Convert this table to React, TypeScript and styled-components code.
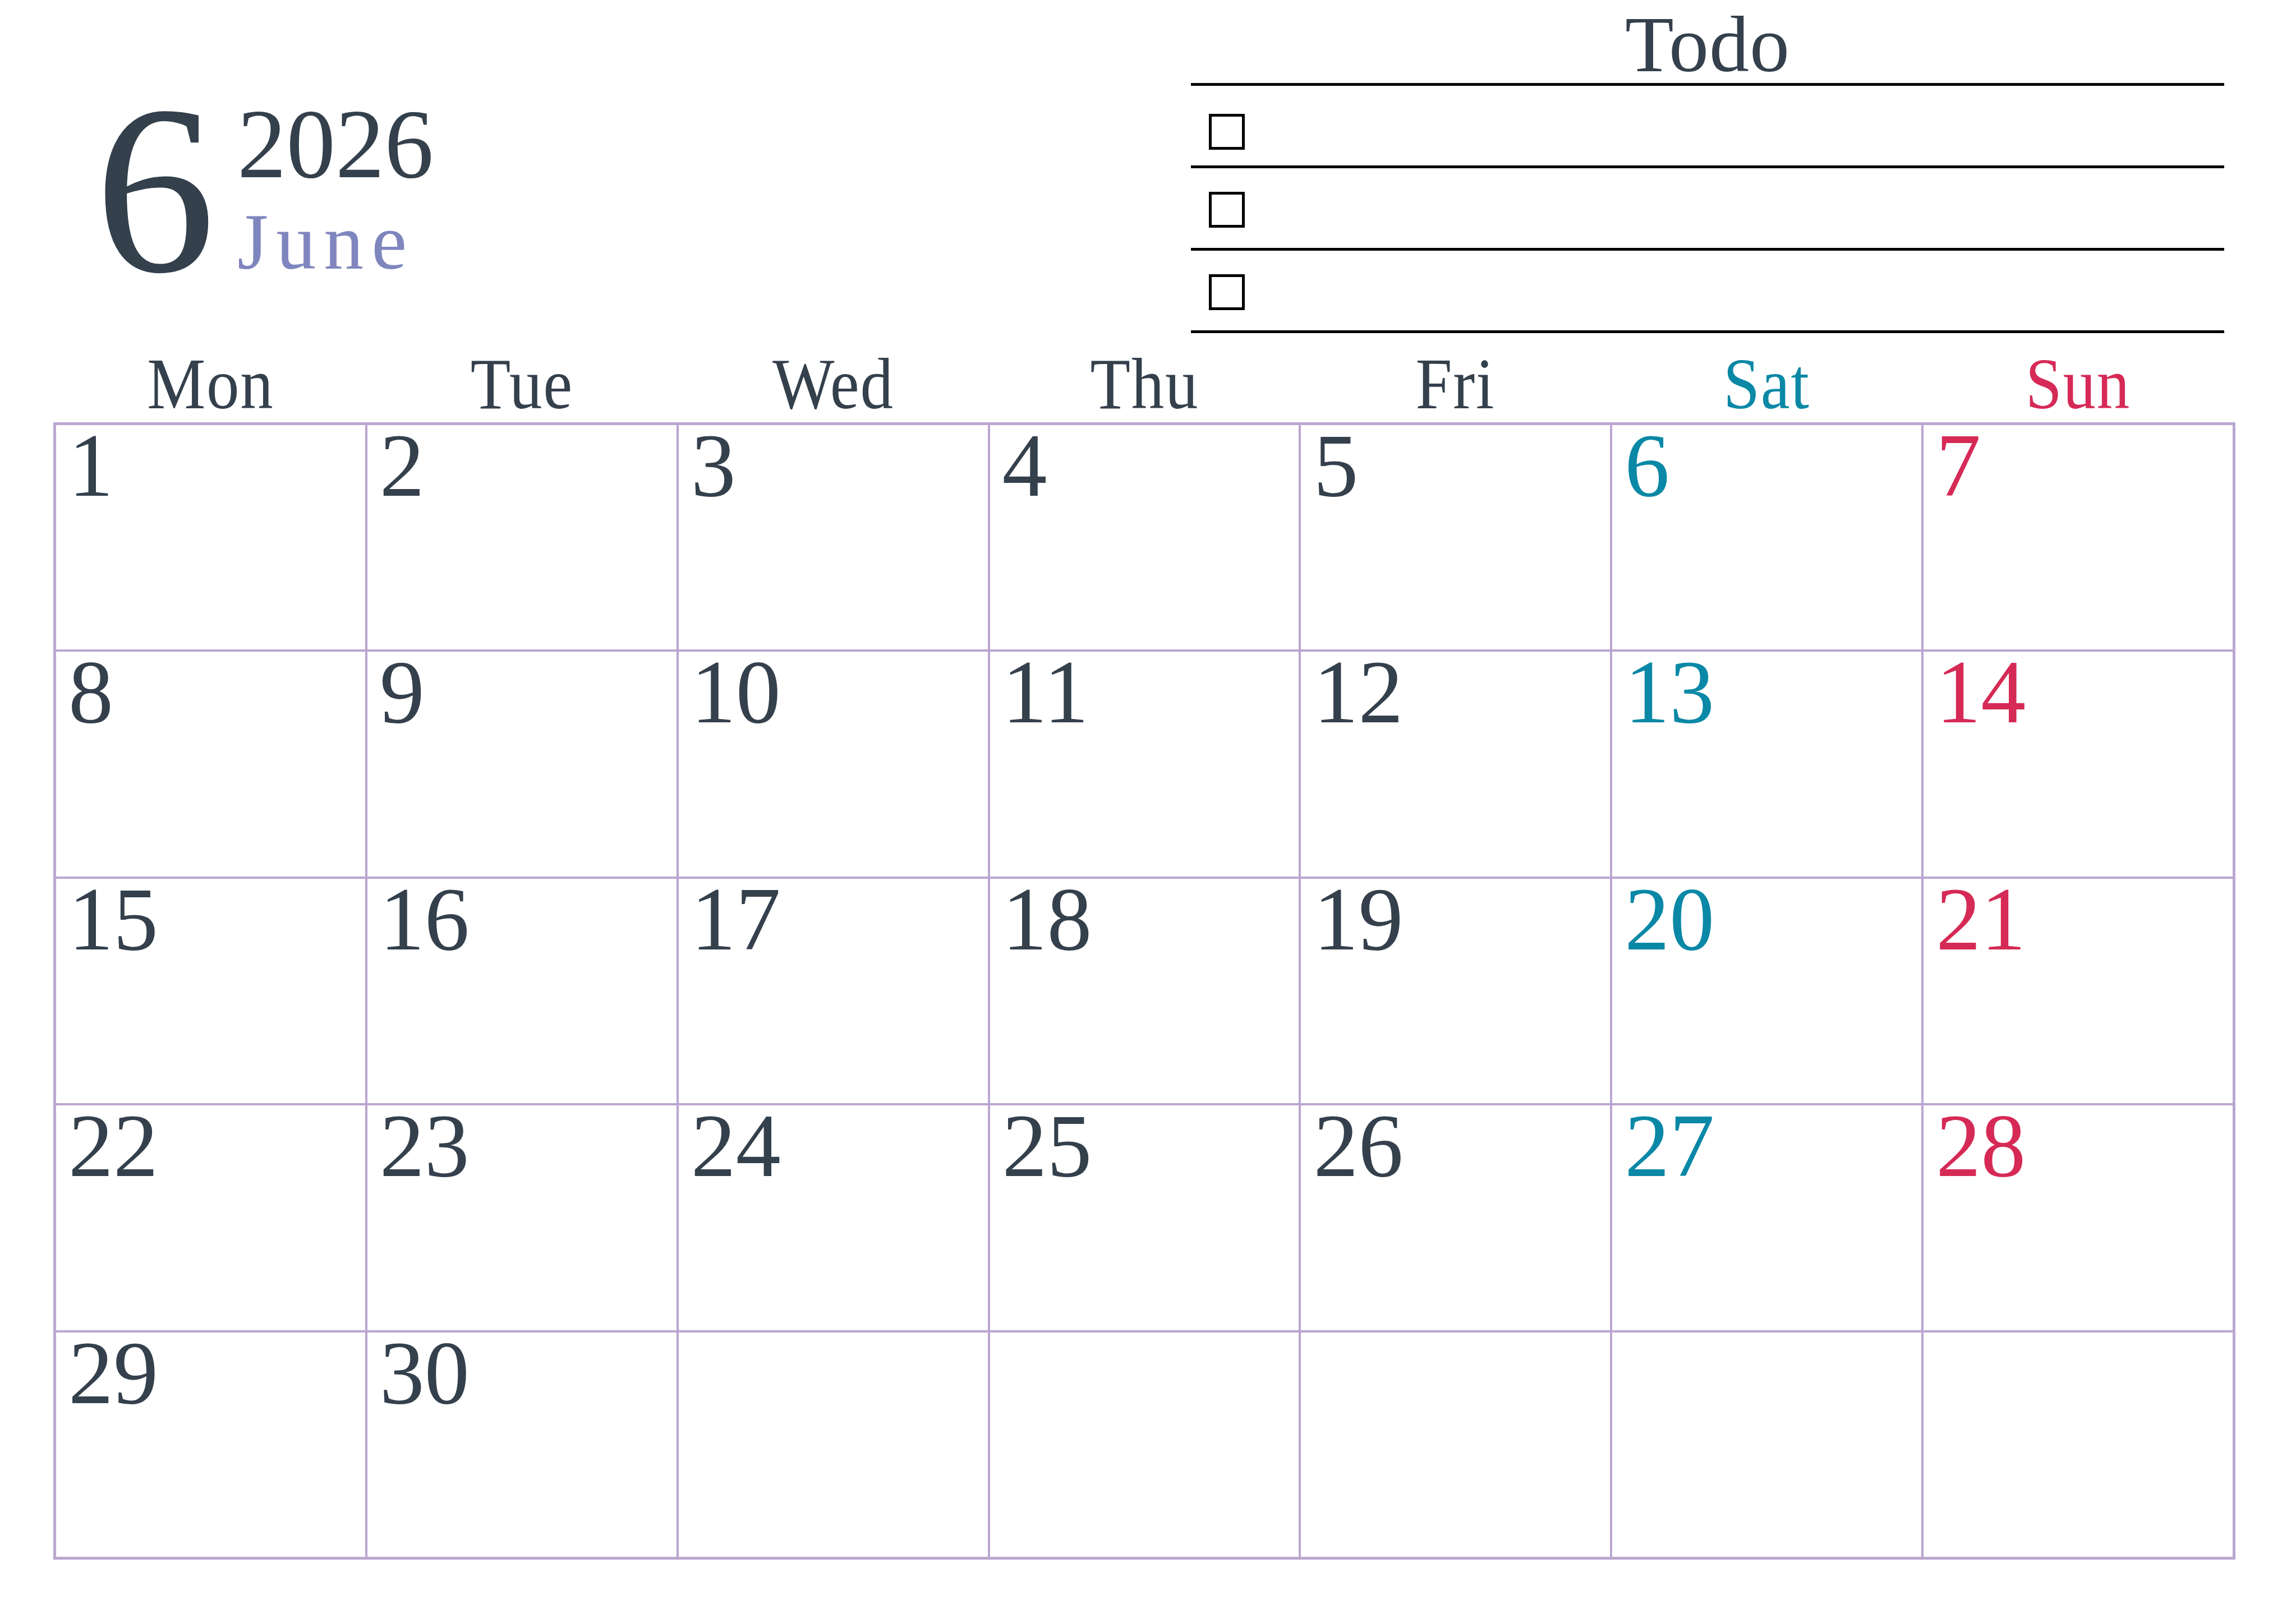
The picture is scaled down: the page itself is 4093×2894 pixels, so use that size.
import React from "react";
import styled, { createGlobalStyle } from "styled-components";

const GlobalStyle = createGlobalStyle`
  html, body {
    margin: 0;
    padding: 0;
    background: #ffffff;
  }
  * {
    box-sizing: border-box;
  }
`;

const ink = "#34404c";
const lineColor = "#bba6d0";
const satColor = "#0a88a6";
const sunColor = "#d62a56";

type Tone = "plain" | "sat" | "sun";

const toneColor = (tone: Tone) =>
  tone === "sat" ? satColor : tone === "sun" ? sunColor : ink;

export const Page = styled.div`
  width: 4093px;
  height: 2894px;
  padding: 0 108px 0 95px;
  background: #ffffff;
  font-family: "Liberation Serif", "Times New Roman", serif;
  color: ${ink};
`;

export const TopArea = styled.div`
  height: 619px;
  display: flex;
  justify-content: space-between;
  align-items: flex-start;
`;

export const MonthBlock = styled.div`
  display: flex;
  align-items: flex-start;
  margin-left: 74px;
`;

export const BigMonth = styled.div`
  font-size: 430px;
  line-height: 1;
  margin-top: 123px;
`;

export const YearColumn = styled.div`
  display: flex;
  flex-direction: column;
  margin-top: 170px;
  margin-left: 39px;
`;

export const Year = styled.div`
  font-size: 175px;
  line-height: 1;
`;

export const MonthName = styled.div`
  font-size: 142px;
  line-height: 1;
  margin-top: 15px;
  letter-spacing: 14px;
  color: #7f86be;
`;

export const TodoBox = styled.div`
  width: 1842px;
  margin-right: 20px;
  display: flex;
  flex-direction: column;
`;

export const TodoTitle = styled.div`
  font-size: 142px;
  line-height: 158px;
  height: 148px;
  text-align: center;
  letter-spacing: 1px;
`;

export const TodoList = styled.div`
  border-top: 5px solid #000000;
`;

export const TodoRow = styled.div`
  height: 147px;
  border-bottom: 5px solid #000000;
  padding: 42px 0 0 32px;

  &:first-child {
    padding-top: 50px;
  }
`;

export const CheckBox = styled.div`
  width: 64px;
  height: 64px;
  border: 5px solid #000000;
`;

export const WeekRow = styled.div`
  display: grid;
  grid-template-columns: repeat(7, 1fr);
  width: 3890px;
  padding: 0 5px;
  column-gap: 4px;
  margin-bottom: 4px;
`;

export const WeekLabel = styled.div<{ $tone: Tone }>`
  font-size: 130px;
  line-height: 1;
  text-align: center;
  letter-spacing: 2px;
  transform: scaleX(0.9);
  color: ${(p) => toneColor(p.$tone)};
`;

export const Grid = styled.div`
  display: grid;
  grid-template-columns: repeat(7, 1fr);
  grid-template-rows: repeat(5, 1fr);
  gap: 4px;
  padding: 5px;
  width: 3890px;
  height: 2028px;
  background: ${lineColor};
`;

export const Cell = styled.div`
  background: #ffffff;
  padding: 0 0 0 22px;
`;

export const DayNumber = styled.div<{ $tone: Tone }>`
  font-size: 160px;
  line-height: 0.9;
  color: ${(p) => toneColor(p.$tone)};
`;

const weekdays: { label: string; tone: Tone }[] = [
  { label: "Mon", tone: "plain" },
  { label: "Tue", tone: "plain" },
  { label: "Wed", tone: "plain" },
  { label: "Thu", tone: "plain" },
  { label: "Fri", tone: "plain" },
  { label: "Sat", tone: "sat" },
  { label: "Sun", tone: "sun" },
];

const days: (number | null)[] = Array.from({ length: 35 }, (_, i) =>
  i < 30 ? i + 1 : null
);

export default function App() {
  return (
    <>
      <GlobalStyle />
      <Page>
        <TopArea>
          <MonthBlock>
            <BigMonth>6</BigMonth>
            <YearColumn>
              <Year>2026</Year>
              <MonthName>June</MonthName>
            </YearColumn>
          </MonthBlock>
          <TodoBox>
            <TodoTitle>Todo</TodoTitle>
            <TodoList>
              {[0, 1, 2].map((i) => (
                <TodoRow key={i}>
                  <CheckBox />
                </TodoRow>
              ))}
            </TodoList>
          </TodoBox>
        </TopArea>

        <WeekRow>
          {weekdays.map((d) => (
            <WeekLabel key={d.label} $tone={d.tone}>
              {d.label}
            </WeekLabel>
          ))}
        </WeekRow>

        <Grid>
          {days.map((day, i) => {
            const col = i % 7;
            const tone: Tone = col === 5 ? "sat" : col === 6 ? "sun" : "plain";
            return (
              <Cell key={i}>
                {day !== null && <DayNumber $tone={tone}>{day}</DayNumber>}
              </Cell>
            );
          })}
        </Grid>
      </Page>
    </>
  );
}
